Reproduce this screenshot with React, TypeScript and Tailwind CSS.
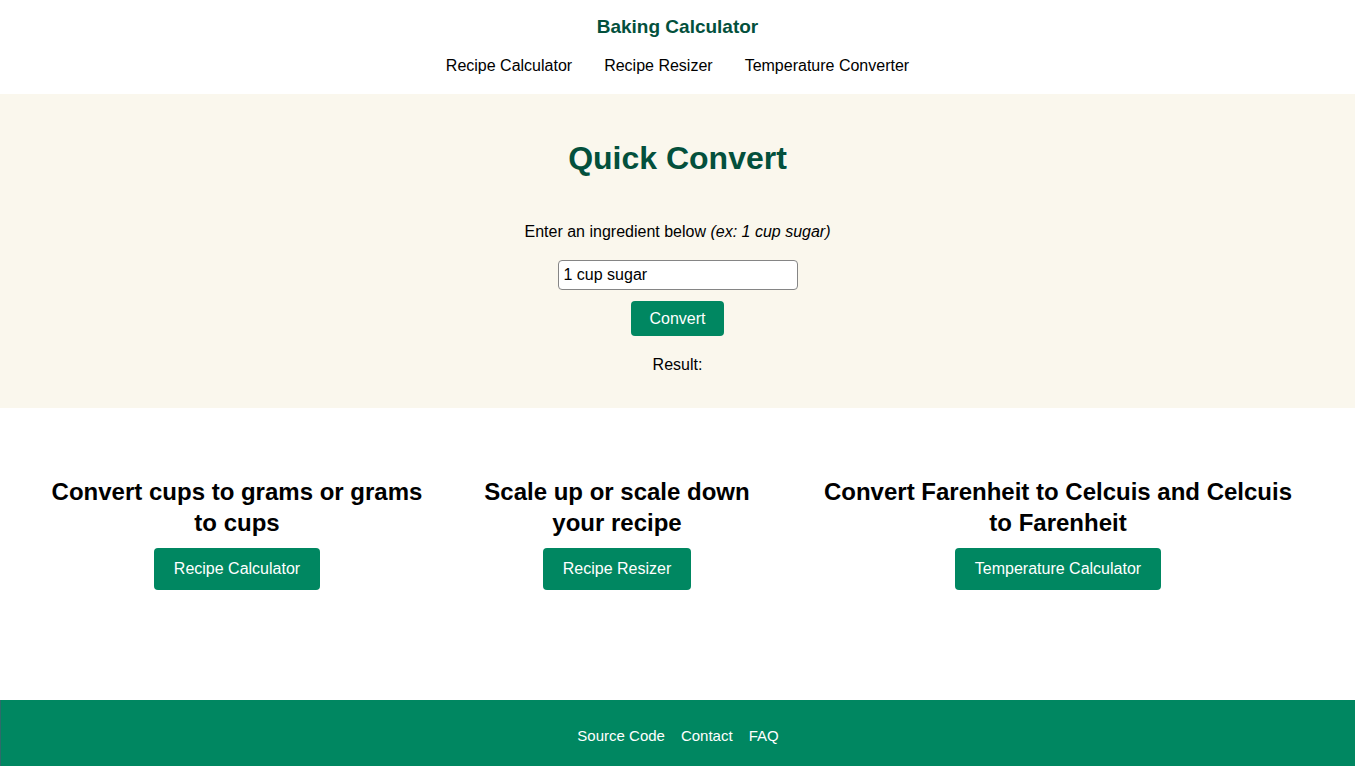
import React from "react";

const font = { fontFamily: '"Liberation Sans", Arial, Helvetica, sans-serif' };

export default function App() {
  return (
    <div className="min-h-[766px] w-full bg-white text-black font-['Liberation_Sans',Arial,sans-serif]" style={font}>
      <header className="h-[94px] flex flex-col items-center pt-[16px]">
        <div className="text-[19px] leading-[22px] font-bold text-[#03503c]">Baking Calculator</div>
        <nav className="mt-[18px] flex gap-[32px] text-[16px] leading-[20px]">
          <a>Recipe Calculator</a>
          <a>Recipe Resizer</a>
          <a>Temperature Converter</a>
        </nav>
      </header>

      <section className="h-[314px] bg-[#faf7ed] flex flex-col items-center pt-[45px]">
        <h1 className="text-[32px] leading-[38px] font-bold text-[#03503c]">Quick Convert</h1>
        <p className="mt-[45px] text-[16px] leading-[20px]">
          Enter an ingredient below <em>(ex: 1 cup sugar)</em>
        </p>
        <input
          className="mt-[18px] w-[240px] h-[30px] rounded-[4px] border border-[#858585] bg-white px-[5px] text-[16px] text-black outline-none"
          style={font}
          defaultValue="1 cup sugar"
        />
        <button className="mt-[11px] h-[35px] px-[18px] rounded-[4px] bg-[#008761] text-white text-[16px]" style={font}>
          Convert
        </button>
        <p className="mt-[19px] text-[16px] leading-[20px]">Result:</p>
      </section>

      <section className="h-[292px] flex pt-[68px] pl-[42px]">
        <div className="w-[390px] flex flex-col items-center text-center">
          <h2 className="text-[24px] leading-[31px] font-bold">Convert cups to grams or grams to cups</h2>
          <button className="mt-[10px] h-[42px] px-[20px] rounded-[4px] bg-[#008761] text-white text-[16px]" style={font}>
            Recipe Calculator
          </button>
        </div>
        <div className="ml-[35px] w-[300px] flex flex-col items-center text-center">
          <h2 className="text-[24px] leading-[31px] font-bold">Scale up or scale down your recipe</h2>
          <button className="mt-[10px] h-[42px] px-[20px] rounded-[4px] bg-[#008761] text-white text-[16px]" style={font}>
            Recipe Resizer
          </button>
        </div>
        <div className="ml-[51px] w-[480px] flex flex-col items-center text-center">
          <h2 className="text-[24px] leading-[31px] font-bold">Convert Farenheit to Celcuis and Celcuis to Farenheit</h2>
          <button className="mt-[10px] h-[42px] px-[20px] rounded-[4px] bg-[#008761] text-white text-[16px]" style={font}>
            Temperature Calculator
          </button>
        </div>
      </section>

      <footer className="h-[66px] bg-[#008761] border-l border-[#2d6b6a] flex justify-center pt-[27px] gap-[16px] text-white text-[15px] leading-[18px]">
        <a>Source Code</a>
        <a>Contact</a>
        <a>FAQ</a>
      </footer>
    </div>
  );
}
